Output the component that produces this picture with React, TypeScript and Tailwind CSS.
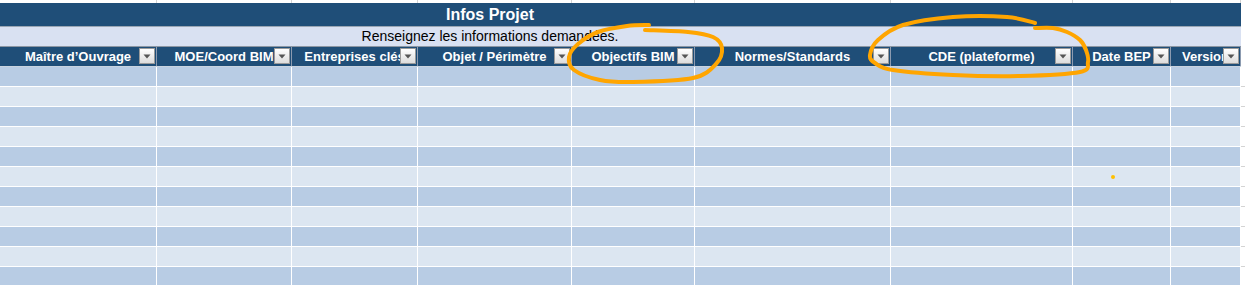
const cols = [
  { w: "w-[157px]", label: "Maître d’Ouvrage" },
  { w: "w-[135px]", label: "MOE/Coord BIM" },
  { w: "w-[126px]", label: "Entreprises clés" },
  { w: "w-[154px]", label: "Objet / Périmètre" },
  { w: "w-[123px]", label: "Objectifs BIM" },
  { w: "w-[196px]", label: "Normes/Standards" },
  { w: "w-[182px]", label: "CDE (plateforme)" },
  { w: "w-[98px]", label: "Date BEP" },
  { w: "w-[70px]", label: "Version" },
];

// smooth path through points (catmull-rom -> cubic)
function smooth(pts: [number, number][]) {
  let d = `M${pts[0][0]},${pts[0][1]}`;
  for (let i = 0; i < pts.length - 1; i++) {
    const p0 = pts[i - 1] ?? pts[i];
    const p1 = pts[i];
    const p2 = pts[i + 1];
    const p3 = pts[i + 2] ?? p2;
    const c1x = p1[0] + (p2[0] - p0[0]) / 6;
    const c1y = p1[1] + (p2[1] - p0[1]) / 6;
    const c2x = p2[0] - (p3[0] - p1[0]) / 6;
    const c2y = p2[1] - (p3[1] - p1[1]) / 6;
    d += ` C${c1x},${c1y} ${c2x},${c2y} ${p2[0]},${p2[1]}`;
  }
  return d;
}

const ring1: [number, number][] = [
  [649, 25], [627, 26], [598, 32], [578, 44], [569, 57], [574, 70], [600, 80],
  [633, 82], [693, 78], [716, 64], [722, 48], [713, 37], [688, 32], [645, 30],
];

const ring2: [number, number][] = [
  [1035, 23], [1007, 17], [953, 17], [903, 25], [878, 40], [870, 55], [875, 63],
  [893, 70], [953, 75], [1020, 76], [1080, 72], [1088, 62], [1086, 50],
  [1080, 40], [1067, 32], [1053, 28], [1035, 28],
];

function Filter() {
  return (
    <span className="absolute right-[1px] top-[1px] flex h-[16px] w-[16px] items-center justify-center border border-[#9a9a9a] bg-gradient-to-b from-white to-[#dcdcdc]">
      <svg width="8" height="5" viewBox="0 0 8 5">
        <path d="M0.5 0.5 L7.5 0.5 L4 4.5 Z" fill="#555" />
      </svg>
    </span>
  );
}

export default function App() {
  const rows = Array.from({ length: 11 }, (_, i) => i);

  return (
    <div className="relative h-[285px] w-[1245px] overflow-hidden bg-white font-['Liberation_Sans',Arial,sans-serif]">
      {/* sliver of the row above */}
      <div className="flex h-[3px] w-[1241px]">
        {cols.map((c) => (
          <div key={c.label} className={`${c.w} h-full border-r border-[#d4d4d4]`} />
        ))}
      </div>

      <div className="flex h-[24px] w-[1241px] items-center border-b border-[#9aa6b4] bg-[#1f4e78]">
        <div className="w-[980px] text-center text-[16px] font-bold text-white">Infos Projet</div>
      </div>

      <div className="flex h-[20px] w-[1241px] items-center border-b border-[#8c96a3] bg-[#d9e1f2]">
        <div className="w-[980px] text-center text-[14px] text-black">
          Renseignez les informations demandées.
        </div>
      </div>

      <div className="flex h-[20px] w-[1241px] border-b border-[#c9d3df] bg-[#1f4e78]">
        {cols.map((c) => (
          <div
            key={c.label}
            className={`${c.w} relative flex h-full items-center justify-center overflow-hidden whitespace-nowrap border-r border-[#8c9bb0] text-[13px] font-bold text-white`}
          >
            {c.label}
            <Filter />
          </div>
        ))}
      </div>

      {rows.map((r) => (
        <div key={r} className="flex h-[20px] w-[1245px]">
          <div className={`flex w-[1241px] border-b border-white ${r % 2 === 0 ? "bg-[#b8cce4]" : "bg-[#dce6f1]"}`}>
            {cols.map((c) => (
              <div key={c.label} className={`${c.w} h-full border-r border-white`} />
            ))}
          </div>
          <div className="flex-1 border-b border-[#d4d4d4]" />
        </div>
      ))}

      <svg className="pointer-events-none absolute left-0 top-0" width="1245" height="285">
        <path d={smooth(ring1)} fill="none" stroke="#ffa500" strokeWidth="4" strokeLinecap="round" strokeLinejoin="round" />
        <path d={smooth(ring2)} fill="none" stroke="#ffa500" strokeWidth="4" strokeLinecap="round" strokeLinejoin="round" />
        <circle cx="1113" cy="177" r="2" fill="#ffc000" />
      </svg>
    </div>
  );
}
